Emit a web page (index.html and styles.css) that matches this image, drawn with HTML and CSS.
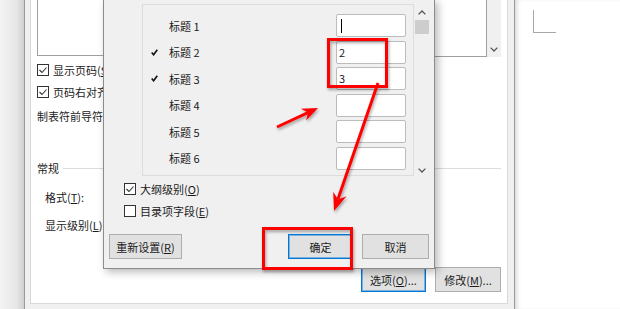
FILE: index.html
```html
<!DOCTYPE html>
<html lang="zh-CN">
<head>
    <meta charset="UTF-8">
    <title>目录选项</title>
    <link rel="stylesheet" href="styles.css">
</head>
<body>
<div class="screen">
    <div class="side"></div>

    <div class="owner">
        <div class="tab">
            <div class="previews">
                <div class="preview preview-print"></div>
                <div class="preview-web">
                    <div class="preview pv-box"></div>
                    <div class="pv-scroll">
                        <svg width="8" height="5" viewBox="0 0 8 5"><path d="M0.6 0.6 L4 4 L7.4 0.6" fill="none" stroke="#555" stroke-width="1.3"/></svg>
                    </div>
                </div>
            </div>
            <div class="opt opt-first">
                <span class="box"><svg width="10" height="10" viewBox="0 0 10 10"><path d="M1.5 5 L4 7.5 L8.5 2.5" fill="none" stroke="#333" stroke-width="1.1"/></svg></span>
                <span>显示页码(<u>S</u>)</span>
            </div>
            <div class="opt opt-next">
                <span class="box"><svg width="10" height="10" viewBox="0 0 10 10"><path d="M1.5 5 L4 7.5 L8.5 2.5" fill="none" stroke="#333" stroke-width="1.1"/></svg></span>
                <span>页码右对齐(<u>R</u>)</span>
            </div>
            <div class="line-text leader">制表符前导符(<u>B</u>):</div>
            <div class="group-title"><span>常规</span><span class="rule"></span></div>
            <div class="line-text field field-format">格式(<u>T</u>):</div>
            <div class="line-text field field-level">显示级别(<u>L</u>):</div>
            <div class="tab-buttons">
                <div class="btn btn-focus btn-options">选项(<u>O</u>)...</div>
                <div class="btn btn-modify">修改(<u>M</u>)...</div>
            </div>
        </div>
    </div>

    <div class="doc"><div class="corner"></div></div>

    <div class="dialog">
        <div class="toc">
            <div class="levels">
                <div class="rows">
                    <div class="row"><span class="mark"></span><span class="name">标题 1</span><span class="level"><span class="caret"></span></span></div>
                    <div class="row"><span class="mark"><svg width="7" height="7" viewBox="0 0 7 7"><path d="M0.7 3.6 L2.6 5.8 L6.3 0.8" fill="none" stroke="#111" stroke-width="1.6"/></svg></span><span class="name">标题 2</span><span class="level">2</span></div>
                    <div class="row"><span class="mark"><svg width="7" height="7" viewBox="0 0 7 7"><path d="M0.7 3.6 L2.6 5.8 L6.3 0.8" fill="none" stroke="#111" stroke-width="1.6"/></svg></span><span class="name">标题 3</span><span class="level">3</span></div>
                    <div class="row"><span class="mark"></span><span class="name">标题 4</span><span class="level"></span></div>
                    <div class="row"><span class="mark"></span><span class="name">标题 5</span><span class="level"></span></div>
                    <div class="row"><span class="mark"></span><span class="name">标题 6</span><span class="level"></span></div>
                </div>
            </div>
            <div class="scroll">
                <svg width="8" height="5" viewBox="0 0 8 5"><path d="M0.6 4.4 L4 1 L7.4 4.4" fill="none" stroke="#555" stroke-width="1.3"/></svg>
                <div class="thumb"></div>
                <div class="fill"></div>
                <svg width="8" height="5" viewBox="0 0 8 5"><path d="M0.6 0.6 L4 4 L7.4 0.6" fill="none" stroke="#555" stroke-width="1.3"/></svg>
            </div>
        </div>

        <div class="dialog-opts">
            <div class="opt">
                <span class="box"><svg width="10" height="10" viewBox="0 0 10 10"><path d="M1.5 5 L4 7.5 L8.5 2.5" fill="none" stroke="#333" stroke-width="1.1"/></svg></span>
                <span>大纲级别(<u>O</u>)</span>
            </div>
            <div class="opt">
                <span class="box"></span>
                <span>目录项字段(<u>E</u>)</span>
            </div>
        </div>

        <div class="dialog-buttons">
            <div class="btn btn-reset">重新设置(<u>R</u>)</div>
            <div class="btn btn-focus btn-ok">确定</div>
            <div class="btn btn-cancel">取消</div>
        </div>
    </div>

    <!-- red annotations drawn over the screenshot -->
    <svg class="marks" width="620" height="309" viewBox="0 0 620 309">
        <defs>
            <filter id="shadow" x="-20%" y="-20%" width="140%" height="140%">
                <feDropShadow dx="1" dy="2" stdDeviation="1.5" flood-color="#000" flood-opacity="0.35"/>
            </filter>
        </defs>
        <g filter="url(#shadow)">
            <g fill="none" stroke="#ff0000" stroke-width="3">
                <rect x="328.5" y="39.5" width="58" height="47"/>
                <rect x="263.5" y="228.5" width="88" height="40"/>
                <line x1="277" y1="127" x2="308" y2="112.6"/>
                <line x1="378" y1="83" x2="338" y2="199"/>
            </g>
            <g fill="#ff0000">
                <polygon points="318,108 306.2,120.6 308,112.6 300.8,108.8"/>
                <polygon points="334,211 346.5,196.3 337.9,199.6 333.2,191.7"/>
            </g>
        </g>
    </svg>
</div>
</body>
</html>
```

FILE: styles.css
```css
* {
    box-sizing: border-box;
}
body {
    margin: 0;
    font-family: "Noto Sans CJK SC", "Noto Sans", sans-serif;
    font-size: 11px;
    color: #1b1b1b;
}
u {
    text-decoration: underline;
    text-underline-offset: 1px;
}
.screen {
    position: relative;
    width: 620px;
    height: 309px;
    overflow: hidden;
    display: flex;
    background: #fff;
}
.side {
    width: 24px;
    background: linear-gradient(to right, #f3f3f3, #e6e6e6 70%, #d0d0d0);
}

/* dialog behind */
.owner {
    width: 491px;
    background: #f0f0f0;
    border-left: 1px solid #9a9a9a;
    border-right: 1px solid #9a9a9a;
    padding-left: 5px;
}
.tab {
    width: 478px;
    height: 305px;
    margin-top: -1px;
    background: #fff;
    border: 1px solid #d9d9d9;
    padding: 0 6px 11px 6px;
    display: flex;
    flex-direction: column;
}
.previews {
    display: flex;
    height: 57px;
    gap: 14px;
}
.preview {
    background: #fff;
    border: 1px solid #a0a0a0;
    border-top: none;
}
.preview-print {
    width: 218px;
    height: 56px;
}
.preview-web {
    flex: 1;
    display: flex;
}
.pv-box {
    flex: 1;
    height: 57px;
}
.pv-scroll {
    width: 14px;
    height: 57px;
    background: #f0f0f0;
    display: flex;
    flex-direction: column;
    justify-content: flex-end;
    align-items: center;
    padding-bottom: 5px;
}
.opt {
    display: flex;
    align-items: center;
    gap: 4px;
    height: 12px;
    line-height: 12px;
    white-space: nowrap;
}
.opt-first {
    margin-top: 7px;
}
.opt-next {
    margin-top: 10px;
}
.box {
    width: 12px;
    height: 12px;
    border: 1px solid #333;
    background: #fff;
    display: flex;
    align-items: center;
    justify-content: center;
    flex: none;
}
.line-text {
    height: 12px;
    line-height: 12px;
    white-space: nowrap;
}
.leader {
    margin-top: 12px;
}
.group-title {
    margin-top: 40px;
    height: 12px;
    line-height: 12px;
    display: flex;
    align-items: center;
    gap: 4px;
}
.rule {
    flex: 1;
    border-top: 1px solid #dcdcdc;
}
.field {
    padding-left: 8px;
}
.field-format {
    margin-top: 17px;
}
.field-level {
    margin-top: 16px;
}
.tab-buttons {
    margin-top: auto;
    display: flex;
    justify-content: flex-end;
    gap: 9px;
}
.btn {
    height: 25px;
    border: 1px solid #adadad;
    background: #e1e1e1;
    display: flex;
    align-items: center;
    justify-content: center;
    white-space: nowrap;
}
.btn-focus {
    border-color: #0078d7;
    box-shadow: inset 0 0 0 1px rgba(0, 120, 215, 0.45);
}
.btn-options {
    width: 65px;
}
.btn-modify {
    width: 66px;
}

/* word page on the right */
.doc {
    flex: 1;
    background: #fff;
    box-shadow: inset 4px 0 4px -2px rgba(0, 0, 0, 0.16);
    padding: 10px 0 0 18px;
}
.corner {
    width: 23px;
    height: 23px;
    border-left: 1px solid #a8a8a8;
    border-bottom: 1px solid #a8a8a8;
}

/* options dialog on top */
.dialog {
    position: absolute;
    left: 103px;
    top: -1px;
    width: 332px;
    height: 270px;
    border: 1px solid #8c8c8c;
    background: #f0f0f0;
    box-shadow: 3px 3px 8px rgba(0, 0, 0, 0.28);
    padding-top: 4px;
    display: flex;
    flex-direction: column;
}
.toc {
    display: flex;
    margin-left: 38px;
}
.levels {
    width: 272px;
    height: 172px;
    border: 1px solid #dcdcdc;
    padding-top: 9px;
}
.rows {
    display: grid;
    grid-auto-rows: 23px;
    row-gap: 3.6px;
}
.row {
    display: flex;
    align-items: center;
}
.mark {
    width: 26px;
    padding-left: 8px;
    display: flex;
    align-items: center;
}
.name {
    width: 167px;
    white-space: nowrap;
}
.level {
    width: 70px;
    height: 23px;
    border: 1px solid #bcbcbc;
    border-radius: 2px;
    background: #fff;
    padding-left: 2px;
    line-height: 21px;
    display: flex;
    align-items: center;
}
.caret {
    width: 1px;
    height: 14px;
    margin-left: 2px;
    background: #000;
}
.scroll {
    width: 16px;
    height: 172px;
    display: flex;
    flex-direction: column;
    align-items: center;
    padding: 6px 0 3px;
}
.thumb {
    width: 14px;
    height: 14px;
    margin-top: 5px;
    background: #cdcdcd;
}
.fill {
    flex: 1;
}
.dialog-opts {
    margin: 7px 0 0 20px;
    display: flex;
    flex-direction: column;
    gap: 10px;
}
.dialog-buttons {
    display: flex;
    gap: 9px;
    margin: 17px 5px 0 5px;
}
.btn-reset {
    width: 73px;
}
.btn-ok {
    width: 65px;
    margin-left: auto;
}
.btn-cancel {
    width: 67px;
}
.marks {
    position: absolute;
    left: 0;
    top: 0;
    pointer-events: none;
}
```
